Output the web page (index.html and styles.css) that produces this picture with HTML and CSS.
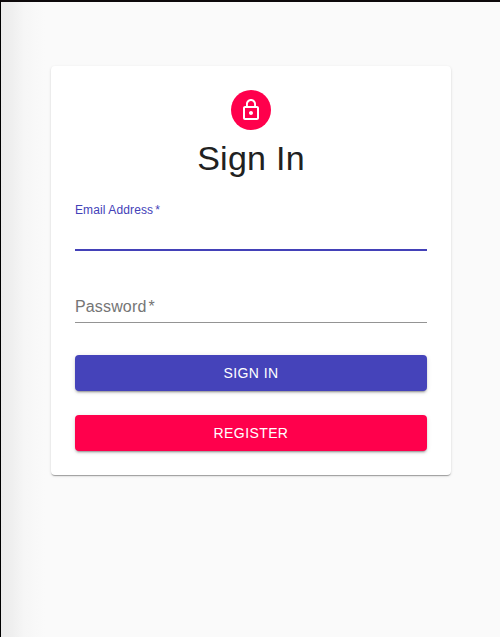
FILE: index.html
```html
<!DOCTYPE html>
<html lang="en">
<head>
<meta charset="utf-8">
<title>Sign In</title>
<link rel="stylesheet" href="styles.css">
</head>
<body>
<main class="card">
  <div class="avatar">
    <svg viewBox="0 0 24 24" width="24" height="24" fill="currentColor" aria-hidden="true"><path d="M12 17c1.1 0 2-.9 2-2s-.9-2-2-2-2 .9-2 2 .9 2 2 2zm6-9h-1V6c0-2.760-2.240-5-5-5S7 3.240 7 6v2H6c-1.100 0-2 .9-2 2v10c0 1.100.9 2 2 2h12c1.100 0 2-.9 2-2V10c0-1.100-.9-2-2-2zM8.900 6c0-1.710 1.390-3.100 3.100-3.100s3.100 1.390 3.100 3.100v2H8.900V6zM18 20H6V10h12v10z"/></svg>
  </div>
  <h1 class="title">Sign In</h1>
  <form class="form">
    <div class="field field-active"><label class="label">Email Address<span class="star">*</span></label></div>
    <div class="field field-password"><label class="label">Password<span class="star">*</span></label></div>
    <button class="button primary" type="button">Sign in</button>
    <button class="button secondary" type="button">Register</button>
  </form>
</main>
</body>
</html>
```
FILE: styles.css
```css
* { box-sizing: border-box; }
body {
  margin: 0;
  height: 637px;
  padding-top: 64px;
  overflow: hidden;
  border-top: 2px solid #0d090b;
  border-left: 1px solid #000;
  background: linear-gradient(90deg, #ebebeb 0, #efefef 12px, #f6f6f6 24px, #fafafa 45px);
  font-family: "Liberation Sans", sans-serif;
  color: #212121;
}
.card {
  display: flex;
  flex-direction: column;
  align-items: center;
  width: 400px;
  height: 409px;
  margin-left: 50px;
  padding: 24px;
  border-radius: 4px;
  background: #fff;
  box-shadow: 0 2px 1px -1px rgba(0,0,0,.2), 0 1px 1px rgba(0,0,0,.14), 0 1px 3px rgba(0,0,0,.12);
}
.avatar {
  display: grid;
  place-items: center;
  flex: none;
  width: 40px;
  height: 40px;
  border-radius: 50%;
  background: #ff004c;
  color: #fff;
}
.title { margin: 7px 0 0; font-size: 34px; line-height: 42px; font-weight: 400; letter-spacing: .25px; }
.form { display: flex; flex-direction: column; width: 100%; }
.field { display: flex; border-bottom: 1px solid #949494; }
.label { font-size: 16px; line-height: 18px; color: #757575; letter-spacing: .15px; }
.star { margin-left: 2px; }
.field-active { height: 48px; margin-top: 24px; border-bottom: 2px solid #4341b8; }
.field-active .label { font-size: 12px; line-height: 14px; color: #4341b8; letter-spacing: .11px; }
.field-password { height: 25px; margin-top: 47px; }
.button {
  height: 36px;
  margin: 0;
  padding: 0;
  border: 0;
  border-radius: 4px;
  color: #fff;
  font: 400 14px/24px "Liberation Sans", sans-serif;
  letter-spacing: .4px;
  text-transform: uppercase;
  box-shadow: 0 3px 1px -2px rgba(0,0,0,.2), 0 2px 2px rgba(0,0,0,.14), 0 1px 5px rgba(0,0,0,.12);
}
.primary { margin-top: 32px; background: #4543ba; }
.secondary { margin-top: 24px; background: #ff004c; }
```
